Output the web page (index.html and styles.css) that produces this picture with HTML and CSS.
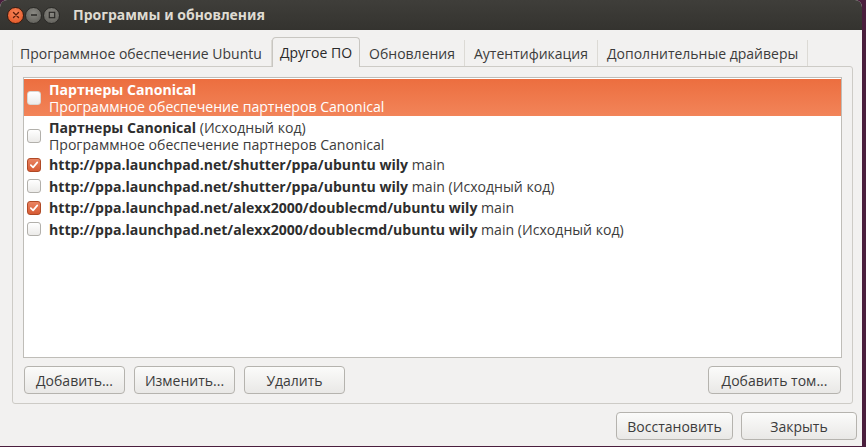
FILE: index.html
```html
<!DOCTYPE html>
<html lang="ru">
<head>
<meta charset="utf-8">
<title>Программы и обновления</title>
<link rel="stylesheet" href="styles.css">
</head>
<body>
<div class="frame">
  <div class="window">
    <div class="titlebar">
      <div class="controls">
        <span class="wbtn close"><svg width="10" height="10" viewBox="0 0 10 10"><path d="M2.5 2.5 L7.5 7.5 M7.5 2.5 L2.5 7.5" stroke="#5a1d0a" stroke-width="1.4" stroke-linecap="round"/></svg></span>
        <span class="wbtn"><svg width="10" height="10" viewBox="0 0 10 10"><path d="M2 5 H8" stroke="#2b2a27" stroke-width="1.4"/></svg></span>
        <span class="wbtn"><svg width="10" height="10" viewBox="0 0 10 10"><rect x="2.3" y="2.3" width="5.4" height="5.4" fill="none" stroke="#2b2a27" stroke-width="1.2"/></svg></span>
      </div>
      <div class="title">Программы и обновления</div>
    </div>
    <div class="content">
      <div class="tabs">
        <div class="tab">Программное обеспечение Ubuntu</div>
        <div class="tab active">Другое ПО</div>
        <div class="tab">Обновления</div>
        <div class="tab">Аутентификация</div>
        <div class="tab">Дополнительные драйверы</div>
      </div>
      <div class="panel">
        <div class="list">
          <div class="row two selected">
            <span class="cb"></span>
            <div class="txt"><div class="line"><b>Партнеры Canonical</b></div><div class="line">Программное обеспечение партнеров Canonical</div></div>
          </div>
          <div class="row two">
            <span class="cb"></span>
            <div class="txt"><div class="line"><b>Партнеры Canonical</b> (Исходный код)</div><div class="line">Программное обеспечение партнеров Canonical</div></div>
          </div>
          <div class="row">
            <span class="cb on"><svg width="10" height="10" viewBox="0 0 10 10"><path d="M1.8 5.2 L4.1 7.4 L8.3 2.4" fill="none" stroke="#fff" stroke-width="1.7" stroke-linecap="round" stroke-linejoin="round"/></svg></span>
            <div class="txt"><b>http://ppa.launchpad.net/shutter/ppa/ubuntu wily</b> main</div>
          </div>
          <div class="row">
            <span class="cb"></span>
            <div class="txt"><b>http://ppa.launchpad.net/shutter/ppa/ubuntu wily</b> main (Исходный код)</div>
          </div>
          <div class="row">
            <span class="cb on"><svg width="10" height="10" viewBox="0 0 10 10"><path d="M1.8 5.2 L4.1 7.4 L8.3 2.4" fill="none" stroke="#fff" stroke-width="1.7" stroke-linecap="round" stroke-linejoin="round"/></svg></span>
            <div class="txt"><b>http://ppa.launchpad.net/alexx2000/doublecmd/ubuntu wily</b> main</div>
          </div>
          <div class="row">
            <span class="cb"></span>
            <div class="txt"><b>http://ppa.launchpad.net/alexx2000/doublecmd/ubuntu wily</b> main (Исходный код)</div>
          </div>
        </div>
        <div class="actions">
          <button class="btn">Добавить...</button>
          <button class="btn">Изменить...</button>
          <button class="btn">Удалить</button>
          <span class="spacer"></span>
          <button class="btn wide">Добавить том...</button>
        </div>
      </div>
      <div class="footer">
        <button class="btn f1">Восстановить</button>
        <button class="btn f2">Закрыть</button>
      </div>
    </div>
  </div>
</div>
</body>
</html>
```
FILE: styles.css
```css
* { box-sizing: border-box; }
html, body { margin: 0; padding: 0; }
body {
  width: 866px; height: 447px; overflow: hidden;
  background: #4a1e3d;
  font-family: "Open Sans", "Noto Sans", sans-serif;
  font-size: 14px;
  color: #3c3c3c;
}
.frame { width: 862px; height: 446px; }
.window {
  width: 862px; height: 446px;
  background: #f2f1f0;
  border-radius: 7px 7px 0 0;
  overflow: hidden;
  display: flex; flex-direction: column;
}
.titlebar {
  height: 30px;
  background: linear-gradient(#3f3e3a, #34332f);
  display: flex; align-items: center;
  padding-left: 7px;
  flex: none;
}
.controls { display: flex; gap: 1px; }
.wbtn {
  width: 17px; height: 17px; border-radius: 50%;
  background: radial-gradient(circle at 50% 35%, #8a8983, #5b5a55);
  border: 1px solid #2b2a27;
  display: flex; align-items: center; justify-content: center;
}
.wbtn.close { background: radial-gradient(circle at 50% 35%, #f9865a, #e0501f); border-color: #3b1c10; }
.title {
  margin-left: 13px;
  color: #dfdbd2;
  font-family: "Noto Sans", sans-serif;
  font-weight: bold;
  font-size: 14px;
  margin-top: -1px;
}
.content { flex: 1; padding: 10px 5px 0 12px; display: flex; flex-direction: column; }
.tabs { display: flex; height: 26px; align-items: flex-end; }
.tab {
  height: 26px; padding: 2px 9px 0;
  display: flex; align-items: center;
  border-right: 1px solid #dcdad5;
  font-size: 14px;
  color: #3c3c3c;
  line-height: 1;
}
.tab:first-child { border-left: 1px solid #dcdad5; padding-left: 7px; padding-right: 9px; }
.tab.active {
  height: 30px; margin-bottom: -1px;
  background: #f2f1f0;
  border: 1px solid #c8c6c1; border-bottom: none;
  border-radius: 4px 4px 0 0;
  padding: 0 7px;
  position: relative; z-index: 1;
  color: #2a2a2a;
}
.panel {
  width: 841px; height: 338px;
  border: 1px solid #cdcbc6;
  border-radius: 0 3px 3px 3px;
  padding: 10px 10px 0 10px;
  display: flex; flex-direction: column;
}
.list {
  height: 281px;
  background: #fff;
  border: 1px solid #bfbdb8;
  padding-top: 1px;
}
.row {
  display: flex; align-items: center;
  height: 21.5px;
  padding-left: 3px;
  color: #3c3c3c;
  font-size: 14.1px;
  line-height: 17px;
}
.line { height: 17px; }
.row.two { height: 37px; }
.row.selected {
  background: linear-gradient(#ec6e3f, #f28459);
  color: #fff;
  margin-bottom: 1px;
}
.row.selected b { color: #fff; }
.row b { color: #2e2e2e; }
.txt { margin-left: 8px; white-space: nowrap; }
.cb {
  width: 14px; height: 14px; flex: none;
  border: 1px solid #b2b0ab; border-radius: 3px;
  background: linear-gradient(#ffffff, #ecebe9);
  display: flex; align-items: center; justify-content: center;
}
.row.selected .cb { border-color: #d8d6d2; }
.cb.on {
  background: linear-gradient(#e98463, #d75b34);
  border-color: #b04a26;
}
.actions {
  display: flex; gap: 9px; margin-top: 8px;
  padding-left: 1px; padding-right: 1px;
}
.spacer { flex: 1; }
.btn {
  height: 28px; width: 101px;
  border: 1px solid #b5b3ae; border-radius: 4px;
  background: linear-gradient(#fbfbfa, #e9e8e6);
  font-family: "Open Sans", "Noto Sans", sans-serif;
  font-size: 14px; color: #3c3c3c;
  padding: 0;
}
.btn.wide { width: 133px; }
.footer { display: flex; justify-content: flex-end; gap: 8px; margin-top: 8px; padding-right: 0; }
.btn.f1 { width: 117px; }
.btn.f2 { width: 116px; }
```
